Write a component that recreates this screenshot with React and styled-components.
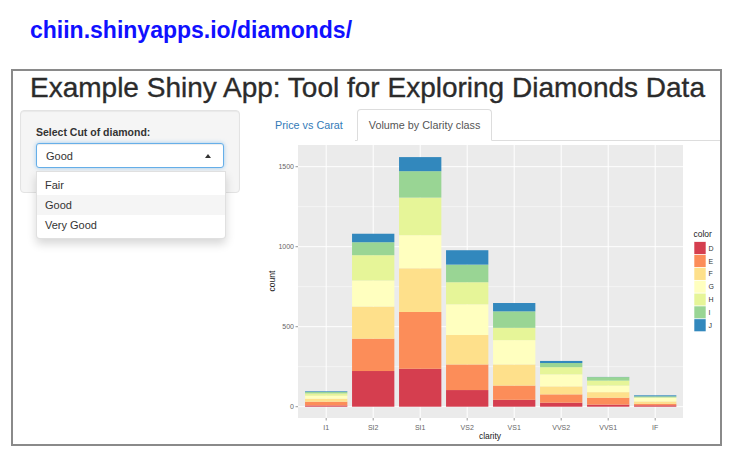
import React from "react";
import styled, { createGlobalStyle } from "styled-components";

const GlobalStyle = createGlobalStyle`
  html, body {
    margin: 0;
    padding: 0;
    background: #fff;
    font-family: "Liberation Sans", Arial, Helvetica, sans-serif;
  }
`;

const Page = styled.div`
  width: 735px;
  height: 457px;
  overflow: hidden;
`;

const UrlLine = styled.div`
  padding: 17px 0 0 30px;
  height: 26px;
  line-height: 26px;
  font-size: 23px;
  font-weight: bold;
  color: #1010ff;
`;

const Frame = styled.div`
  box-sizing: border-box;
  margin: 26px 0 0 11px;
  width: 711px;
  height: 377px;
  border: 2px solid #8a8a8a;
  overflow: hidden;
`;

const Title = styled.h1`
  margin: 1px 0 0 17px;
  font-size: 28px;
  line-height: 31px;
  font-weight: normal;
  color: #2b2b2b;
  -webkit-text-stroke: 0.35px #2b2b2b;
  white-space: nowrap;
`;

const Row = styled.div`
  display: flex;
  margin-top: 6px;
`;

const Sidebar = styled.div`
  position: relative;
  box-sizing: border-box;
  margin: 1px 0 0 7px;
  width: 220px;
  height: 83px;
  padding: 15px 15px 0;
  background: #f5f5f5;
  border: 1px solid #e3e3e3;
  border-radius: 4px;
  box-shadow: inset 0 1px 1px rgba(0, 0, 0, 0.05);
`;

const Label = styled.div`
  font-size: 10.5px;
  font-weight: bold;
  color: #333;
  line-height: 12px;
  margin-bottom: 5px;
`;

const SelectBox = styled.div`
  box-sizing: border-box;
  display: flex;
  align-items: center;
  justify-content: space-between;
  height: 25px;
  padding: 0 12px 0 9px;
  background: #fff;
  border: 1px solid #66afe9;
  border-radius: 3px;
  box-shadow: inset 0 1px 1px rgba(0, 0, 0, 0.075), 0 0 4px rgba(102, 175, 233, 0.6);
  font-size: 11px;
  color: #333;
`;

const Caret = styled.span`
  width: 0;
  height: 0;
  border-left: 3.5px solid transparent;
  border-right: 3.5px solid transparent;
  border-bottom: 4px solid #333;
`;

const Menu = styled.div`
  position: absolute;
  left: 15px;
  top: 60px;
  box-sizing: border-box;
  width: 190px;
  padding: 3px 0;
  background: #fff;
  border: 1px solid rgba(0, 0, 0, 0.12);
  border-radius: 0 0 4px 4px;
  box-shadow: 0 5px 10px rgba(0, 0, 0, 0.16);
  z-index: 2;
`;

const Option = styled.div`
  height: 20px;
  line-height: 20px;
  padding-left: 8px;
  font-size: 11px;
  color: #333;
  background: ${({ $active }) => ($active ? "#f5f5f5" : "#fff")};
`;

const Main = styled.div`
  flex: 1;
  margin-left: 10px;
`;

const Tabs = styled.div`
  display: flex;
  margin-left: 13px;
  height: 31px;
  border-bottom: 1px solid #ddd;
`;

const Tab = styled.div`
  box-sizing: border-box;
  height: 32px;
  padding: 0 11px;
  margin-right: 2px;
  display: flex;
  align-items: center;
  font-size: 10.8px;
  color: ${({ $active }) => ($active ? "#555" : "#337ab7")};
  background: #fff;
  border: 1px solid ${({ $active }) => ($active ? "#ddd" : "transparent")};
  border-bottom-color: ${({ $active }) => ($active ? "#fff" : "transparent")};
  border-radius: 4px 4px 0 0;
`;

const Plot = styled.svg`
  display: block;
  font-family: "Liberation Sans", Arial, sans-serif;
`;

const levels = ["I1", "SI2", "SI1", "VS2", "VS1", "VVS2", "VVS1", "IF"];
const colors = ["D", "E", "F", "G", "H", "I", "J"];
const palette = ["#d53e4f", "#fc8d59", "#fee08b", "#ffffbf", "#e6f598", "#99d594", "#3288bd"];
const counts = [
  [8, 23, 19, 19, 14, 9, 4],
  [223, 202, 201, 163, 158, 81, 53],
  [237, 355, 273, 207, 235, 165, 88],
  [104, 160, 184, 192, 138, 110, 90],
  [43, 89, 132, 152, 77, 103, 52],
  [25, 52, 50, 75, 45, 26, 13],
  [13, 43, 35, 41, 31, 22, 1],
  [9, 9, 15, 22, 4, 6, 6],
];

const PX = 48, PY = 4, PW = 385, PH = 273;
const zeroY = 265.7;
const k = 0.16;
const yOf = (v) => zeroY - v * k;
const xOf = (i) => PX + (i + 0.6) * 47;
const barW = 42.3;

const Chart = () => (
  <Plot width="469" height="300">
    <rect x={PX} y={PY} width={PW} height={PH} fill="#ebebeb" />
    {[250, 750, 1250].map((v) => (
      <line key={v} x1={PX} x2={PX + PW} y1={yOf(v)} y2={yOf(v)} stroke="#fff" strokeWidth="0.5" />
    ))}
    {[0, 500, 1000, 1500].map((v) => (
      <line key={v} x1={PX} x2={PX + PW} y1={yOf(v)} y2={yOf(v)} stroke="#fff" strokeWidth="1" />
    ))}
    {levels.map((l, i) => (
      <line key={l} x1={xOf(i)} x2={xOf(i)} y1={PY} y2={PY + PH} stroke="#fff" strokeWidth="1" />
    ))}
    {counts.map((row, i) => {
      let acc = 0;
      return row.map((c, j) => {
        const y0 = yOf(acc);
        acc += c;
        const y1 = yOf(acc);
        return (
          <rect key={`${i}-${j}`} x={xOf(i) - barW / 2} y={y1} width={barW} height={y0 - y1} fill={palette[j]} />
        );
      });
    })}
    {[0, 500, 1000, 1500].map((v) => (
      <g key={v}>
        <line x1={PX - 2.5} x2={PX} y1={yOf(v)} y2={yOf(v)} stroke="#555" strokeWidth="0.6" />
        <text x={PX - 4} y={yOf(v) + 2.4} textAnchor="end" fontSize="7" fill="#666">{v}</text>
      </g>
    ))}
    {levels.map((l, i) => (
      <g key={l}>
        <line x1={xOf(i)} x2={xOf(i)} y1={PY + PH} y2={PY + PH + 2.5} stroke="#555" strokeWidth="0.6" />
        <text x={xOf(i)} y={288.5} textAnchor="middle" fontSize="7" fill="#666">{l}</text>
      </g>
    ))}
    <text x={240} y={298} textAnchor="middle" fontSize="8.5" fill="#222">clarity</text>
    <text x={25} y={140} textAnchor="middle" fontSize="8.5" fill="#222" transform="rotate(-90 25 140)">count</text>
    <text x={443.5} y={96} fontSize="8.5" fill="#222">color</text>
    {colors.map((c, j) => (
      <g key={c}>
        <rect x={444} y={100.7 + 12.86 * j} width={12} height={12.86} fill={palette[j]} stroke="#fff" strokeWidth="0.6" />
        <text x={458.5} y={100.7 + 12.86 * j + 9} fontSize="7" fill="#333">{c}</text>
      </g>
    ))}
  </Plot>
);

export default function App() {
  return (
    <Page>
      <GlobalStyle />
      <UrlLine>chiin.shinyapps.io/diamonds/</UrlLine>
      <Frame>
        <Title>Example Shiny App: Tool for Exploring Diamonds Data</Title>
        <Row>
          <Sidebar>
            <Label>Select Cut of diamond:</Label>
            <SelectBox>
              <span>Good</span>
              <Caret />
            </SelectBox>
            <Menu>
              <Option>Fair</Option>
              <Option $active>Good</Option>
              <Option>Very Good</Option>
            </Menu>
          </Sidebar>
          <Main>
            <Tabs>
              <Tab>Price vs Carat</Tab>
              <Tab $active>Volume by Clarity class</Tab>
            </Tabs>
            <Chart />
          </Main>
        </Row>
      </Frame>
    </Page>
  );
}
